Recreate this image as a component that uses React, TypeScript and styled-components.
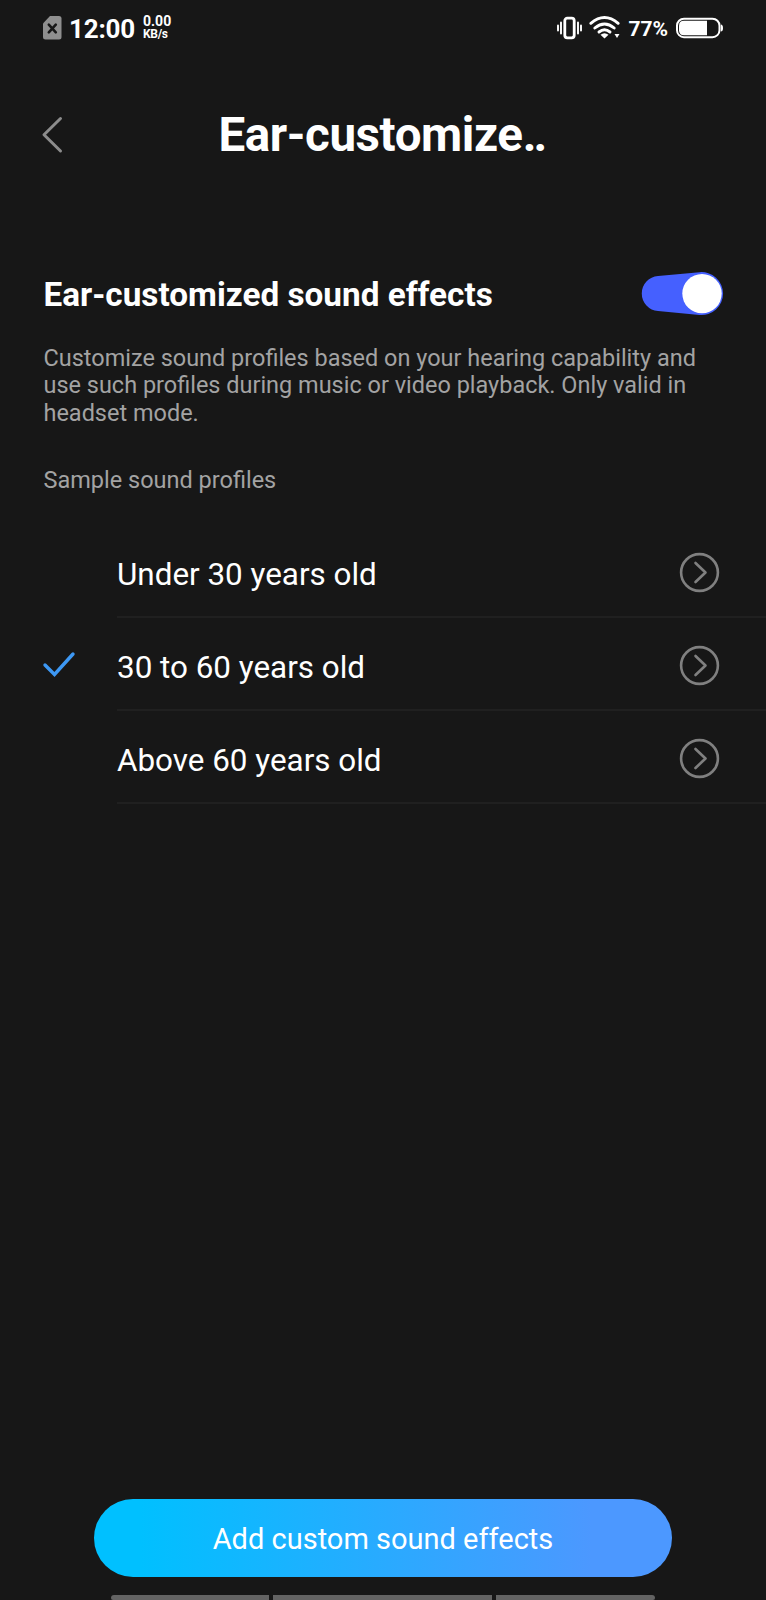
import React from "react";
import styled, { createGlobalStyle } from "styled-components";

const GlobalStyle = createGlobalStyle`
  * { box-sizing: border-box; }
  body { margin: 0; background: #171717; }
`;

const Screen = styled.main`
  width: 766px;
  height: 1600px;
  overflow: hidden;
  display: flex;
  flex-direction: column;
  background: #171717;
  color: #fff;
  font-family: Roboto, "Liberation Sans", sans-serif;
  white-space: nowrap;
`;

const StatusBar = styled.header`
  height: 56px;
  padding: 0 43px;
  display: flex;
  align-items: center;
  justify-content: space-between;
`;

const StatusGroup = styled.div`
  display: flex;
  align-items: center;
`;

const Clock = styled.span`
  margin-left: 7px;
  width: 74px;
  font-size: 26px;
  line-height: 30px;
  font-weight: 700;
  letter-spacing: -0.2px;
  padding-top: 1px;
`;

const NetSpeed = styled.div`
  display: flex;
  flex-direction: column;
  font-weight: 700;
  padding-bottom: 1px;
`;

const SpeedValue = styled.span`
  font-size: 14px;
  line-height: 14px;
`;

const SpeedUnit = styled.span`
  font-size: 12px;
  line-height: 13px;
  letter-spacing: -0.3px;
`;

const Percent = styled.span`
  width: 48px;
  padding: 1px 0 0 0.5px;
  font-size: 21px;
  line-height: 24px;
  font-weight: 700;
`;

const TitleBar = styled.div`
  height: 158px;
  padding: 0 43px;
  display: grid;
  grid-template-columns: 60px 1fr 60px;
  align-items: center;
`;

const Title = styled.h1`
  margin: 0;
  padding-right: 3px;
  font-size: 47.5px;
  line-height: 56px;
  font-weight: 700;
  text-align: center;
  letter-spacing: -0.4px;
`;

const Dots = styled.span`
  letter-spacing: -2.8px;
`;

const Intro = styled.section`
  padding: 55px 42.500px 0 43.5px;
`;

const SettingRow = styled.div`
  display: flex;
  align-items: center;
  justify-content: space-between;
  height: 47px;
`;

const Heading = styled.h2`
  margin: 0;
  padding-top: 4px;
  font-size: 33.3px;
  line-height: 40px;
  font-weight: 700;
`;

const Description = styled.p`
  margin: 28.5px 0 0;
  color: #a3a3a3;
  font-size: 23.47px;
  line-height: 27.6px;
`;

const SectionLabel = styled.h3`
  margin: 39px 0 0;
  color: #a3a3a3;
  font-size: 23.5px;
  line-height: 28px;
  font-weight: 400;
`;

const ProfileList = styled.ul`
  list-style: none;
  margin: 31.2px 0 0;
  padding: 0;
`;

const ProfileItem = styled.li`
  display: flex;
  height: 93px;
  padding-left: 43px;
`;

const CheckSlot = styled.div`
  width: 74px;
  display: flex;
  align-items: center;
`;

const ProfileBody = styled.div`
  flex: 1;
  display: flex;
  align-items: center;
  justify-content: space-between;
  padding: 3px 46px 0 0;
  border-bottom: 2px solid #202020;
`;

const ProfileName = styled.span`
  padding-top: 5px;
  font-size: 31.4px;
  line-height: 38px;
`;

const Footer = styled.footer`
  margin-top: auto;
  display: flex;
  flex-direction: column;
  align-items: center;
`;

const AddButton = styled.button`
  width: 577.500px;
  height: 78px;
  margin: 0 0 18px;
  padding: 2px 0 0;
  border: 0;
  border-radius: 39px;
  background: linear-gradient(90deg, #00c0ff 8%, #4c98ff 86%);
  color: #fff;
  font: 400 29px/36px Roboto, "Liberation Sans", sans-serif;
`;

const NavHints = styled.div`
  display: flex;
  gap: 4px;
  height: 5px;
`;

const NavHint = styled.i<{ $width: number; $side?: "left" | "right" }>`
  width: ${(p) => p.$width}px;
  background: #636363;
  border-radius: ${(p) =>
    p.$side === "left" ? "3px 0 0 2px" : p.$side === "right" ? "0 3px 2px 0" : "0"};
`;

const Icon = styled.svg`
  display: block;
  flex: none;
  overflow: visible;
`;

const VibrateIcon = styled(Icon)`
  margin-right: 7px;
`;

const WifiIcon = styled(Icon)`
  margin-right: 8px;
`;

const profiles = [
  { name: "Under 30 years old", selected: false },
  { name: "30 to 60 years old", selected: true },
  { name: "Above 60 years old", selected: false },
];

export default function App() {
  return (
    <Screen>
      <GlobalStyle />
      <StatusBar>
        <StatusGroup>
          <Icon width="19" height="24" viewBox="0 0 19 24">
            <path d="M7 0H16Q18.5 0 18.5 2.5V21Q18.5 23.500 16 23.500H2.500Q0 23.500 0 21V7.500Z" fill="#8f8f8f" />
            <path d="M5.800 8.700L12.800 16.300M12.800 8.700L5.800 16.300" stroke="#171717" strokeWidth="2.600" strokeLinecap="round" />
          </Icon>
          <Clock>12:00</Clock>
          <NetSpeed>
            <SpeedValue>0.00</SpeedValue>
            <SpeedUnit>KB/s</SpeedUnit>
          </NetSpeed>
        </StatusGroup>
        <StatusGroup>
          <VibrateIcon width="25" height="22" viewBox="0 0 25 22" stroke="#fff" fill="none">
            <rect x="7.800" y="1.200" width="9.400" height="19.600" rx="2.500" strokeWidth="2.800" />
            <path d="M1 8.500V13.500M4 5.500V16.500M21 5.500V16.500M24 8.500V13.500" strokeWidth="1.900" strokeLinecap="round" />
          </VibrateIcon>
          <WifiIcon width="31" height="24" viewBox="0 0 31 24">
            <path d="M1.800 7.300Q15.500 -4.300 29.200 7.300M5.800 12Q15.500 3.800 25.200 12M10 16Q15.500 11.700 21 16" fill="none" stroke="#fff" strokeWidth="2.900" strokeLinecap="round" />
            <path d="M11.500 18.800Q15.500 15.500 19.500 18.800L15.500 22.500Z" fill="#fff" />
            <path d="M25.500 18H30.500L28 22Z" fill="#fff" />
          </WifiIcon>
          <Percent>77%</Percent>
          <Icon width="47" height="21" viewBox="0 0 47 21">
            <rect x="1" y="0.700" width="42.500" height="18.500" rx="7" fill="none" stroke="#fff" strokeWidth="2" />
            <path d="M8 2.700H31V17.200H8Q3 17.200 3 12.200V7.700Q3 2.700 8 2.700Z" fill="#fff" />
            <path d="M44.800 6.500Q47 6.500 47 10Q47 13.500 44.800 13.500Z" fill="#fff" />
          </Icon>
        </StatusGroup>
      </StatusBar>

      <TitleBar>
        <Icon width="20" height="36" viewBox="0 0 20 36">
          <path d="M17.500 1.500L1 17.700L17.500 34" fill="none" stroke="#8c8c8c" strokeWidth="3" strokeLinecap="round" strokeLinejoin="round" />
        </Icon>
        <Title>
          Ear-customize<Dots>..</Dots>
        </Title>
      </TitleBar>

      <Intro>
        <SettingRow>
          <Heading>Ear-customized sound effects</Heading>
          <Icon width="83" height="44" viewBox="0 0 83 44" role="switch" aria-checked="true">
            <path d="M17 5L58.500 1.200A21.500 21.500 0 1 1 58.500 44L17 40A17.550 17.550 0 0 1 17 5Z" fill="#4560ff" />
            <circle cx="61" cy="22.600" r="19.700" fill="#fff" />
          </Icon>
        </SettingRow>
        <Description>
          Customize sound profiles based on your hearing capability and
          <br />
          use such profiles during music or video playback. Only valid in
          <br />
          headset mode.
        </Description>
        <SectionLabel>Sample sound profiles</SectionLabel>
      </Intro>

      <ProfileList>
        {profiles.map((profile) => (
          <ProfileItem key={profile.name}>
            <CheckSlot>
              {profile.selected && (
                <Icon width="32" height="25" viewBox="0 0 32 25">
                  <path d="M2 13L11.500 22.500L30 2" fill="none" stroke="#3d98f4" strokeWidth="3.400" strokeLinecap="round" />
                </Icon>
              )}
            </CheckSlot>
            <ProfileBody>
              <ProfileName>{profile.name}</ProfileName>
              <Icon width="41" height="41" viewBox="0 0 41 41" fill="none" stroke="#808080">
                <circle cx="20.500" cy="20.500" r="18.400" strokeWidth="2.600" />
                <path d="M16.500 11L26.500 20.500L16.500 30" strokeWidth="2.600" strokeLinecap="round" strokeLinejoin="round" />
              </Icon>
            </ProfileBody>
          </ProfileItem>
        ))}
      </ProfileList>

      <Footer>
        <AddButton type="button">Add custom sound effects</AddButton>
        <NavHints>
          <NavHint $width={158} $side="left" />
          <NavHint $width={219} />
          <NavHint $width={159} $side="right" />
        </NavHints>
      </Footer>
    </Screen>
  );
}
